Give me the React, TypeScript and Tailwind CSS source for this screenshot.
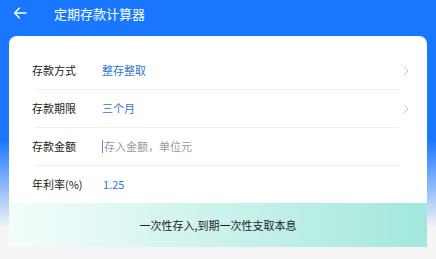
import React from "react";

const Chevron = () => (
  <svg width="6" height="10" viewBox="0 0 6 10" className="ml-auto">
    <path d="M1 1 L5 5 L1 9" fill="none" stroke="#c4c4c4" strokeWidth="1" />
  </svg>
);

const Divider = () => <div className="h-px ml-[27px] mr-[28px] bg-[#f0f0f0]" />;

export default function App() {
  return (
    <div
      className="w-[436px] h-[259px] overflow-hidden bg-[linear-gradient(to_bottom,#1977ff_0px,#1977ff_140px,#f5f5f5_228px,#f5f5f5_259px)]"
      style={{ fontFamily: '"Noto Sans CJK SC", "Noto Sans", sans-serif' }}
    >
      <div className="h-[26px] flex items-center pl-[13px] text-white">
        <svg width="14" height="12" viewBox="0 0 14 12">
          <path d="M13 6 H1.5 M6.5 1 L1.5 6 L6.5 11" fill="none" stroke="white" strokeWidth="1.4" strokeLinecap="round" strokeLinejoin="round" />
        </svg>
        <span className="ml-[27px] text-[13px] leading-none">定期存款计算器</span>
      </div>
      <div className="mt-[10px] mx-[9px] bg-white rounded-t-[8px] pt-[16px] h-[211px] flex flex-col">
        <div className="h-[37px] flex items-center pl-[23px] pr-[18px] text-[11px]">
          <span className="w-[70px] text-[#222]">存款方式</span>
          <span className="text-[#2f74d0]">整存整取</span>
          <Chevron />
        </div>
        <Divider />
        <div className="h-[37px] flex items-center pl-[23px] pr-[18px] text-[11px]">
          <span className="w-[70px] text-[#222]">存款期限</span>
          <span className="text-[#2f74d0]">三个月</span>
          <Chevron />
        </div>
        <Divider />
        <div className="h-[37px] flex items-center pl-[23px] pr-[18px] text-[11px]">
          <span className="w-[70px] text-[#222]">存款金额</span>
          <span className="w-px h-[13px] bg-[#5a8fe0] mr-px" />
          <span className="text-[#9a9a9a]">存入金额，单位元</span>
        </div>
        <Divider />
        <div className="h-[37px] flex items-center pl-[23px] pr-[18px] text-[11px]">
          <span className="w-[71px] text-[#222]">年利率(%)</span>
          <span className="text-[#2f74d0]">1.25</span>
        </div>
        <div className="h-[44px] flex items-center justify-center text-[11px] text-[#222] bg-[linear-gradient(to_right,#f4fdfc,#a2e8dc)]">
          一次性存入,到期一次性支取本息
        </div>
      </div>
    </div>
  );
}
